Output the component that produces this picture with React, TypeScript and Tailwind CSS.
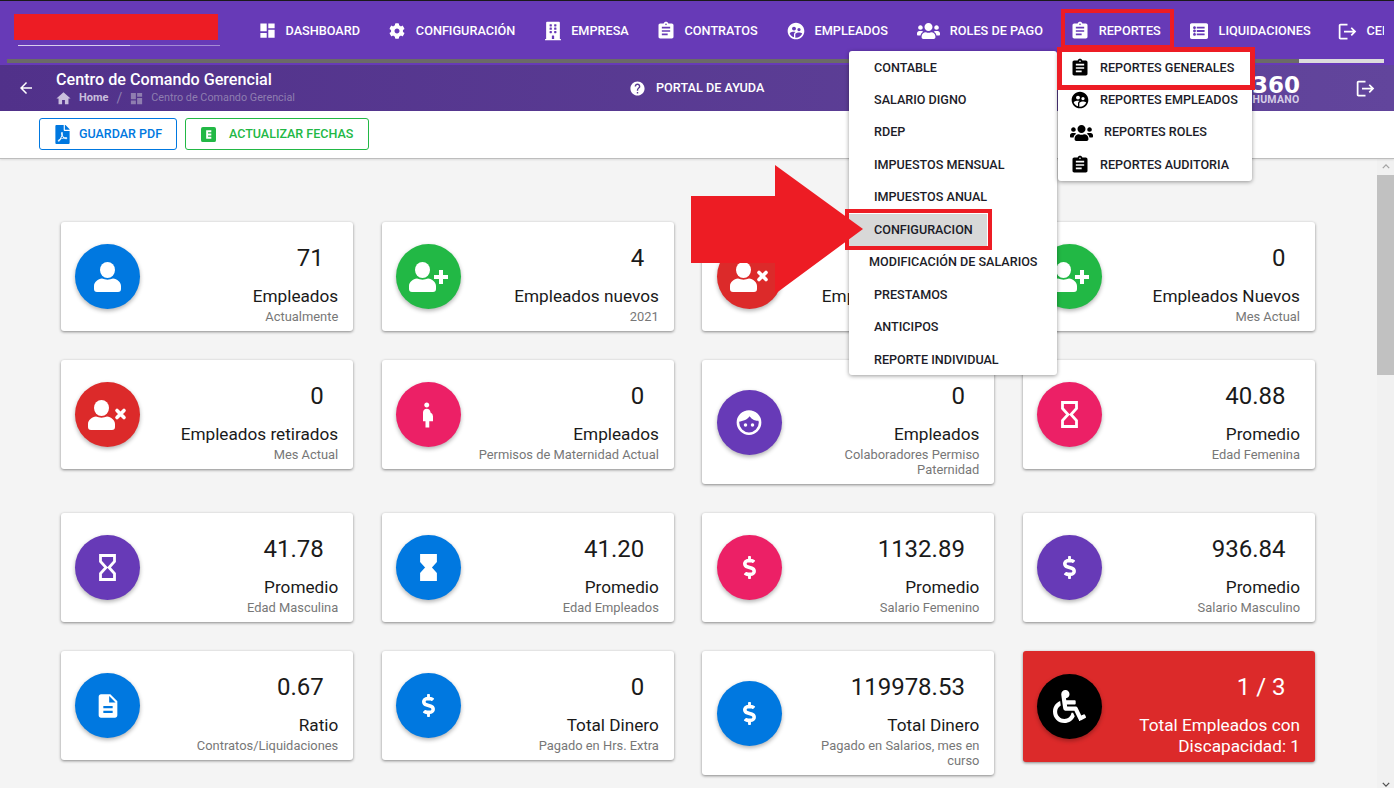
import React from 'react';
import { MdDashboard, MdAssignment, MdSupervisedUserCircle, MdLogout, MdHelp, MdHome, MdArrowBack, MdPregnantWoman, MdDescription } from 'react-icons/md';
import { FaCog, FaBuilding, FaUsers, FaListAlt, FaDollarSign, FaFilePdf, FaWheelchair } from 'react-icons/fa';

const nav = [
  { w: 'w-[16px]', icon: <MdDashboard className="w-[19px] h-[19px] shrink-0" />, label: 'DASHBOARD' },
  { w: 'w-[16px]', icon: <FaCog className="w-[16px] h-[16px] shrink-0" />, label: 'CONFIGURACIÓN' },
  { w: 'w-[16px]', icon: <FaBuilding className="w-[16px] h-[20px] shrink-0" />, label: 'EMPRESA' },
  { w: 'w-[16px]', icon: <MdAssignment className="w-[20px] h-[20px] shrink-0" />, label: 'CONTRATOS' },
  { w: 'w-[17px]', icon: <MdSupervisedUserCircle className="w-[20px] h-[20px] shrink-0" />, label: 'EMPLEADOS' },
  { w: 'w-[22px]', icon: <FaUsers className="w-[23px] h-[20px] shrink-0" />, label: 'ROLES DE PAGO' },
  { w: 'w-[16px]', icon: <MdAssignment className="w-[20px] h-[20px] shrink-0" />, label: 'REPORTES' },
  { w: 'w-[18px]', icon: <FaListAlt className="w-[18px] h-[18px] shrink-0" />, label: 'LIQUIDACIONES' },
  { w: 'w-[16px]', icon: <MdLogout className="w-[21px] h-[21px] shrink-0" />, label: 'CERRAR' },
];

function UserIcon({ mark }: { mark?: 'plus' | 'times' }) {
  return (
    <svg viewBox={mark ? '0 0 39 30' : '0 0 27 30'} className={mark ? 'w-[39px] h-[30px]' : 'w-[27px] h-[30px]'}>
      <ellipse cx="13.500" cy="8" rx="7.500" ry="8" fill="currentColor" />
      <path fill="currentColor" d="M0 27v-3c0-4 4-7 8-7.500 3.500 1.500 7.500 1.500 11 0 4 .5 8 3.500 8 7.500v3a3 3 0 0 1-3 3H3a3 3 0 0 1-3-3Z" />
      {mark === 'plus' && <path fill="currentColor" d="M30 8h4v5h5v4h-5v5h-4v-5h-5v-4h5Z" />}
      {mark === 'times' && <path stroke="currentColor" strokeWidth="3.600" strokeLinecap="round" d="M29 10.500l7 7M36 10.500l-7 7" />}
    </svg>
  );
}

function Hourglass({ solid }: { solid?: boolean }) {
  return (
    <svg viewBox="0 0 17 27" className="w-[17px] h-[27px]">
      <path d="M1.500 1.500h14v6L10 13.500l5.500 6v6h-14v-6L7 13.500l-5.500-6Z" fill={solid ? 'currentColor' : 'none'} stroke="currentColor" strokeWidth="2.800" />
    </svg>
  );
}

function FaceIcon() {
  return (
    <svg viewBox="0 0 24 24" className="w-[28px] h-[28px]">
      <circle cx="12" cy="12.500" r="9.500" fill="none" stroke="currentColor" strokeWidth="2.200" />
      <path fill="currentColor" d="M3 11.500C3 6 7 2.500 12 2.500s9 3.500 9 8.500c-3.500 0-6.500-1-8.500-4-1.500 2.500-5.500 4.500-9.500 4.500Z" />
      <circle cx="9" cy="14.500" r="1.500" fill="currentColor" />
      <circle cx="15" cy="14.500" r="1.500" fill="currentColor" />
    </svg>
  );
}

type CardT = { c: string; icon: React.ReactNode; n: string; l: string; s?: string; red?: boolean };
const dollar = <FaDollarSign className="w-[23px] h-[23px]" />;
const cards: CardT[] = [
  { c: 'bg-[#0078e0]', icon: <UserIcon />, n: '71', l: 'Empleados', s: 'Actualmente' },
  { c: 'bg-[#22b845]', icon: <UserIcon mark="plus" />, n: '4', l: 'Empleados nuevos', s: '2021' },
  { c: 'bg-[#dc2a2a]', icon: <UserIcon mark="times" />, n: '1', l: 'Empleados retirados', s: '2021' },
  { c: 'bg-[#22b845]', icon: <UserIcon mark="plus" />, n: '0', l: 'Empleados Nuevos', s: 'Mes Actual' },
  { c: 'bg-[#dc2a2a]', icon: <UserIcon mark="times" />, n: '0', l: 'Empleados retirados', s: 'Mes Actual' },
  { c: 'bg-[#ec2066]', icon: <MdPregnantWoman className="w-[30px] h-[30px]" />, n: '0', l: 'Empleados', s: 'Permisos de Maternidad Actual' },
  { c: 'bg-[#673ab7]', icon: <FaceIcon />, n: '0', l: 'Empleados', s: 'Colaboradores Permiso Paternidad' },
  { c: 'bg-[#ec2066]', icon: <Hourglass />, n: '40.88', l: 'Promedio', s: 'Edad Femenina' },
  { c: 'bg-[#673ab7]', icon: <Hourglass />, n: '41.78', l: 'Promedio', s: 'Edad Masculina' },
  { c: 'bg-[#0078e0]', icon: <Hourglass solid />, n: '41.20', l: 'Promedio', s: 'Edad Empleados' },
  { c: 'bg-[#ec2066]', icon: dollar, n: '1132.89', l: 'Promedio', s: 'Salario Femenino' },
  { c: 'bg-[#673ab7]', icon: dollar, n: '936.84', l: 'Promedio', s: 'Salario Masculino' },
  { c: 'bg-[#0078e0]', icon: <MdDescription className="w-[28px] h-[28px]" />, n: '0.67', l: 'Ratio', s: 'Contratos/Liquidaciones' },
  { c: 'bg-[#0078e0]', icon: dollar, n: '0', l: 'Total Dinero', s: 'Pagado en Hrs. Extra' },
  { c: 'bg-[#0078e0]', icon: dollar, n: '119978.53', l: 'Total Dinero', s: 'Pagado en Salarios, mes en curso' },
  { c: 'bg-black', icon: <FaWheelchair className="w-[33px] h-[33px]" />, n: '1 / 3', l: 'Total Empleados con Discapacidad: 1', red: true },
];

function Card({ card }: { card: CardT }) {
  return (
    <div className={`flex items-center rounded-[3px] pl-[14.400px] pr-[15px] pt-[22px] shadow-[0_1px_3px_rgba(0,0,0,0.45)] ${card.red ? 'bg-[#dc2a2a] text-white pb-[5px]' : 'bg-white text-[#1a1a1a] pb-[7px]'}`}>
      <div className={`flex items-center justify-center w-[65px] h-[65px] shrink-0 rounded-full text-white shadow-[0_2px_4px_rgba(0,0,0,0.3)] ${card.red ? '-mt-[17px]' : '-mt-[15px]'} ${card.c}`}>{card.icon}</div>
      <div className="flex-1 flex flex-col items-end text-right">
        <div className="text-[24px] leading-[29px] pr-[14.500px] mb-[13px]">{card.n}</div>
        <div className={`w-[175px] text-[17.200px] ${card.red ? 'leading-[21px]' : 'leading-[20px]'}`}>{card.l}</div>
        {card.s && <div className="w-[190px] mt-[3px] text-[12.900px] leading-[15px] text-[#777777]">{card.s}</div>}
      </div>
    </div>
  );
}

const menu1 = ['CONTABLE', 'SALARIO DIGNO', 'RDEP', 'IMPUESTOS MENSUAL', 'IMPUESTOS ANUAL', 'CONFIGURACION', 'MODIFICACIÓN DE SALARIOS', 'PRESTAMOS', 'ANTICIPOS', 'REPORTE INDIVIDUAL'];
const menu2 = [
  { i: <MdAssignment className="w-[20px] h-[20px]" />, t: 'REPORTES GENERALES', g: 'gap-[10px]' },
  { i: <MdSupervisedUserCircle className="w-[20px] h-[20px]" />, t: 'REPORTES EMPLEADOS', g: 'gap-[10px]' },
  { i: <FaUsers className="w-[23px] h-[20px]" />, t: 'REPORTES ROLES', g: 'gap-[11px]' },
  { i: <MdAssignment className="w-[20px] h-[20px]" />, t: 'REPORTES AUDITORIA', g: 'gap-[10px]' },
];

export default function App() {
  return (
    <div className="relative flex flex-col w-[1394px] h-[788px] overflow-hidden bg-[#f4f4f4] font-['Roboto',sans-serif]">
      <header className="h-[65px] shrink-0 bg-[#673ab7] border-t border-[#1a1a1a] text-white">
        <div className="flex h-[58px]">
          <div className="w-[259px] shrink-0 pl-[14px] pt-[13px]">
            <div className="w-[204px] h-[26px] bg-[#ed1c24]" />
            <div className="flex w-[202px] h-px ml-[4px] mt-[5px]">
              <div className="w-[112px] bg-[#d8cdec]" />
              <div className="flex-1 bg-[#a48cd4]" />
            </div>
          </div>
          <nav className="flex items-center gap-[29.300px] overflow-hidden w-[1125px] pt-[2px]">
            {nav.map((n) => (
              <div key={n.label} className="flex items-center gap-[10.500px] shrink-0">
                <span className={`flex justify-center ${n.w}`}>{n.icon}</span>
                <span className="text-[12.700px] font-medium">{n.label}</span>
              </div>
            ))}
          </nav>
        </div>
        <div className="flex h-[4px] ml-[7px] mr-[10px]">
          <div className="flex-1 bg-[#6b6b67]" />
          <div className="w-[85px] bg-[#dcdcdc]" />
        </div>
      </header>

      <div className="h-[46px] shrink-0 flex items-center bg-gradient-to-r from-[#51318a] to-[#62459c] text-white">
        <MdArrowBack className="w-[18px] h-[18px] ml-[17px]" />
        <div className="ml-[21px] w-[573px]">
          <div className="text-[16.150px] font-medium leading-[19px]">Centro de Comando Gerencial</div>
          <div className="flex items-center text-[11px] leading-[14px] mt-[1px]">
            <MdHome className="w-[17px] h-[17px] -ml-[1px] text-[#c9bfdc]" />
            <span className="ml-[7px] font-bold text-[#c9bfdc]">Home</span>
            <span className="ml-[8px] text-[#8f7eb0] text-[14px]">/</span>
            <MdDashboard className="ml-[7px] w-[15px] h-[15px] text-[#8f7eb0]" />
            <span className="ml-[7px] text-[10.800px] text-[#8f7eb0]">Centro de Comando Gerencial</span>
          </div>
        </div>
        <MdHelp className="w-[17px] h-[17px]" />
        <span className="ml-[10px] text-[12.700px] font-medium">PORTAL DE AYUDA</span>
        <div className="ml-auto flex flex-col items-center w-[50px] mr-[54px] mt-[3px]">
          <span className="text-[23px] leading-[20px] font-bold font-['DejaVu_Sans',sans-serif]">360</span>
          <span className="text-[10.500px] leading-[10px] font-bold tracking-[0.3px] text-[#d5cde6]">HUMANO</span>
        </div>
        <MdLogout className="w-[21px] h-[21px] mr-[18px]" />
      </div>

      <div className="h-[48px] shrink-0 flex items-start gap-[8px] pl-[39px] pt-[7px] bg-white border-b border-[#bdbdbd] shadow-[0_1px_2px_rgba(0,0,0,0.1)] z-10">
        <button className="flex items-center h-[32px] w-[138px] pl-[15px] rounded-[3px] border border-[#0078e0] text-[#0078e0] text-[12.500px] font-medium">
          <FaFilePdf className="w-[15px] h-[19px]" />
          <span className="ml-[9px]">GUARDAR PDF</span>
        </button>
        <button className="flex items-center h-[32px] w-[184px] pl-[15px] rounded-[3px] border border-[#22b845] text-[#22b845] text-[12.500px] font-medium">
          <svg viewBox="0 0 16 16" className="w-[15px] h-[15px]"><path fill="currentColor" fillRule="evenodd" d="M2 0h12a2 2 0 0 1 2 2v12a2 2 0 0 1-2 2H2a2 2 0 0 1-2-2V2a2 2 0 0 1 2-2Zm3.500 3.500v9h5.500v-2H7.500v-1.500H11v-2H7.500V5.500H11v-2Z" /></svg>
          <span className="ml-[13px]">ACTUALIZAR FECHAS</span>
        </button>
      </div>

      <div className="flex-1 flex min-h-0">
        <main className="flex-1 pt-[63px] pl-[61px]">
          <div className="grid grid-cols-4 items-start gap-x-[28.330px] gap-y-[29px] w-[1254px]">
            {cards.map((c, i) => <Card key={i} card={c} />)}
          </div>
        </main>
        <div className="w-[17px] shrink-0 flex flex-col items-center bg-[#f1f1f1]">
          <svg viewBox="0 0 10 6" className="w-[8px] h-[5px] mt-[5px] text-[#a3a3a3]"><path d="M1 5 5 1l4 4" fill="none" stroke="currentColor" strokeWidth="1.600" /></svg>
          <div className="w-full h-[200px] mt-[6px] bg-[#c1c1c1]" />
          <svg viewBox="0 0 10 6" className="w-[8px] h-[5px] mt-auto mb-[1px] text-[#505050]"><path d="M1 1l4 4 4-4" fill="none" stroke="currentColor" strokeWidth="1.600" /></svg>
        </div>
      </div>

      <div className="absolute left-[849px] top-[51px] w-[208px] h-[324px] pt-[0.800px] flex flex-col rounded-[3px] bg-white shadow-[0_1px_4px_rgba(0,0,0,0.4)] z-20">
        {menu1.map((t) => (
          <div key={t} className={`h-[32.450px] shrink-0 flex items-center text-[12.600px] font-medium text-[#1c1c28] ${t.startsWith('MOD') ? 'pl-[20px]' : 'pl-[25px]'} ${t === 'CONFIGURACION' ? 'bg-[#d8d8d8] w-[138px]' : ''}`}>{t}</div>
        ))}
      </div>

      <div className="absolute left-[1058px] top-[51px] w-[194px] h-[130px] pt-[0.800px] flex flex-col rounded-[3px] bg-white shadow-[0_1px_4px_rgba(0,0,0,0.4)] z-20">
        {menu2.map((m) => (
          <div key={m.t} className={`h-[32.450px] shrink-0 flex items-center pl-[12px] text-[12.600px] font-medium text-[#1c1c28] ${m.g}`}>
            <span className="text-black flex">{m.i}</span>
            <span>{m.t}</span>
          </div>
        ))}
      </div>

      <svg viewBox="0 0 173 130" className="absolute left-[691px] top-[165px] w-[173px] h-[130px] z-40">
        <path fill="#ed1c24" d="M84 0 172 64 84 129V98H0V31H84Z" />
      </svg>
      <div className="absolute left-[845px] top-[209px] w-[147px] h-[41px] border-[4px] border-[#ed1c24] z-30" />
      <div className="absolute left-[1061px] top-[9px] w-[113px] h-[40px] border-[4px] border-[#ed1c24] z-30" />
      <div className="absolute left-[1057px] top-[47px] w-[198px] h-[43px] border-[5px] border-[#ed1c24] z-30" />
    </div>
  );
}
